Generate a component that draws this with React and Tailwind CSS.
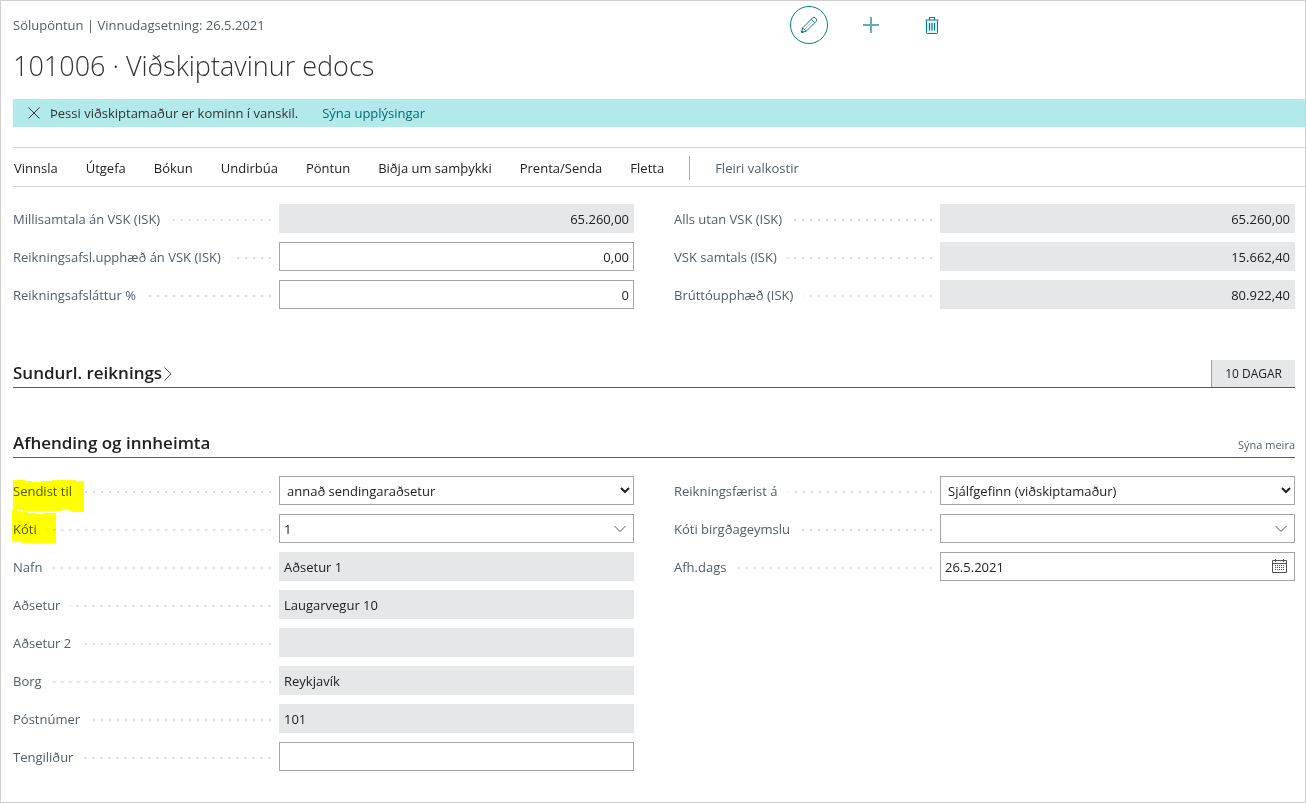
import { useId } from "react";

const menuItems = [
  "Vinnsla",
  "Útgefa",
  "Bókun",
  "Undirbúa",
  "Pöntun",
  "Biðja um samþykki",
  "Prenta/Senda",
  "Fletta"
];

const totalsLeft = [
  { label: "Millisamtala án VSK (ISK)", value: "65.260,00", type: "readonly", align: "right" },
  { label: "Reikningsafsl.upphæð án VSK (ISK)", value: "0,00", type: "text", align: "right" },
  { label: "Reikningsafsláttur %", value: "0", type: "text", align: "right" }
];

const totalsRight = [
  { label: "Alls utan VSK (ISK)", value: "65.260,00", type: "readonly", align: "right" },
  { label: "VSK samtals (ISK)", value: "15.662,40", type: "readonly", align: "right" },
  { label: "Brúttóupphæð (ISK)", value: "80.922,40", type: "readonly", align: "right" }
];

const shippingLeft = [
  { label: "Sendist til", value: "annað sendingaraðsetur", type: "select", marker: "wide" },
  { label: "Kóti", value: "1", type: "lookup", marker: "narrow" },
  { label: "Nafn", value: "Aðsetur 1", type: "readonly" },
  { label: "Aðsetur", value: "Laugarvegur 10", type: "readonly" },
  { label: "Aðsetur 2", value: "", type: "readonly" },
  { label: "Borg", value: "Reykjavík", type: "readonly" },
  { label: "Póstnúmer", value: "101", type: "readonly" },
  { label: "Tengiliður", value: "", type: "text" }
];

const shippingRight = [
  { label: "Reikningsfærist á", value: "Sjálfgefinn (viðskiptamaður)", type: "select" },
  { label: "Kóti birgðageymslu", value: "", type: "lookup" },
  { label: "Afh.dags", value: "26.5.2021", type: "date" }
];

function PencilIcon() {
  return (
    <svg width="18" height="18" viewBox="0 0 18 18" fill="none" stroke="currentColor" strokeLinejoin="round">
      <path d="M1.5 16.5l1.2-4.7L12.6 1.9a1.8 1.8 0 0 1 2.6 0l.9.9a1.8 1.8 0 0 1 0 2.6L6.2 15.3z" />
      <path d="M2.7 11.8l3.5 3.5M11.2 3.3l3.5 3.5" />
      <path d="M4.6 13.4l8-8" strokeOpacity="0.4" />
      <path d="M1.5 16.5l.5-1.8 1.3 1.3z" fill="currentColor" />
    </svg>
  );
}

function PlusIcon() {
  return (
    <svg width="16" height="16" viewBox="0 0 16 16" fill="none" stroke="#5fb0b5" strokeWidth="2">
      <path d="M8 0v16M0 8h16" />
    </svg>
  );
}

function TrashIcon() {
  return (
    <svg width="14" height="17" viewBox="0 0 14 17" fill="none" stroke="currentColor">
      <path d="M1.5 3.5v12a1 1 0 0 0 1 1h9a1 1 0 0 0 1-1v-12" fill="#e0f1f1" />
      <path d="M.5 3h13M4.5 2.5v-2h5v2" strokeWidth="1.2" />
      <path d="M4.5 6v7.5M7 6v7.5M9.5 6v7.5" strokeWidth="1.2" />
    </svg>
  );
}

function CloseIcon() {
  return (
    <svg width="12" height="12" viewBox="0 0 12 12" fill="none" stroke="currentColor">
      <path d="M.5.5l11 11M11.5.5l-11 11" />
    </svg>
  );
}

function ChevronIcon() {
  return (
    <svg width="12" height="8" viewBox="0 0 12 8" fill="none" stroke="currentColor">
      <path d="M.5 1L6 6.5 11.5 1" />
    </svg>
  );
}

function CalendarIcon() {
  return (
    <svg width="15" height="15" viewBox="0 0 15 15" fill="none" stroke="currentColor">
      <path d="M.5 1.5h14v12H.5zM.5 4.5h14" />
      <path d="M3.5 0v3M11.5 0v3" />
      <path d="M3 6.5h9M3 8.5h9M3 10.5h9" strokeDasharray="1 1" />
    </svg>
  );
}

function Marker({ shape }) {
  if (shape === "wide") {
    return (
      <svg className="absolute left-0 top-1 mix-blend-multiply" width="71" height="32" viewBox="0 0 71 32" fill="#ffff00">
        <path d="M0 0h12v1h7v1h9l2-1h9V0h24v1h8v31H59v-1h-3v-1h-7v1H10l-1-1H0z" />
      </svg>
    );
  }

  return (
    <svg className="absolute -left-px -top-1 mix-blend-multiply" width="44" height="33" viewBox="0 0 44 33" fill="#ffff00">
      <path d="M0 0h5v1h5v1h6v1h8l5 1h3V3h12v30H9v-1H2v-1H0z" />
    </svg>
  );
}

function FieldControl({ id, field }) {
  const align = field.align === "right" ? "text-right" : "text-left";

  if (field.type === "select") {
    return (
      <select
        id={id}
        className="flex-1 min-w-0 h-[29px] border border-[#a6a6a6] bg-white pl-[3px] text-[#212121]"
      >
        <option>{field.value}</option>
      </select>
    );
  }

  if (field.type === "lookup" || field.type === "date") {
    return (
      <div className="flex-1 min-w-0 h-[29px] flex items-center border border-[#a6a6a6] bg-white">
        <input
          id={id}
          type="text"
          defaultValue={field.value}
          className="flex-1 min-w-0 h-full px-1 text-[#212121] outline-none"
        />
        <button
          type="button"
          aria-label={field.type === "date" ? "Velja dagsetningu" : "Velja gildi"}
          className="px-[7px] text-[#505050]"
        >
          {field.type === "date" ? <CalendarIcon /> : <ChevronIcon />}
        </button>
      </div>
    );
  }

  if (field.type === "readonly") {
    return (
      <input
        id={id}
        type="text"
        readOnly
        value={field.value}
        className={`flex-1 min-w-0 h-[29px] px-[5px] bg-[#e6e7e9] text-[#212121] outline-none ${align}`}
      />
    );
  }

  return (
    <input
      id={id}
      type="text"
      defaultValue={field.value}
      className={`flex-1 min-w-0 h-[29px] px-1 border border-[#a6a6a6] bg-white text-[#212121] outline-none ${align}`}
    />
  );
}

function Field({ field }) {
  const id = useId();

  return (
    <div className="flex items-center">
      <div className="relative w-[266px] h-[29px] shrink-0 flex items-center gap-2.5 pr-2">
        <label htmlFor={id} className="whitespace-nowrap text-[#505c6d]">
          {field.label}
        </label>
        <span className="flex-1 h-0.5 mt-0.5 bg-[linear-gradient(to_right,transparent_6px,#d8d8dc_6px)] bg-[length:8px_2px] bg-right bg-repeat-x" />
        {field.marker && <Marker shape={field.marker} />}
      </div>

      <FieldControl id={id} field={field} />
    </div>
  );
}

function FieldGrid({ left, right }) {
  return (
    <div className="grid grid-cols-2 gap-x-10 items-start">
      <div className="flex flex-col gap-[9px]">
        {left.map((field) => (
          <Field key={field.label} field={field} />
        ))}
      </div>

      <div className="flex flex-col gap-[9px]">
        {right.map((field) => (
          <Field key={field.label} field={field} />
        ))}
      </div>
    </div>
  );
}

function App() {
  return (
    <div className="min-h-screen bg-white border border-[#cfcfcf] pl-3 font-['Open_Sans','Noto_Sans',sans-serif] text-[13px] leading-5 text-[#212121]">

      <header>
        <div className="flex items-center pt-[5px]">
          <p className="w-3/5 text-[#505c6d]">
            Sölupöntun | Vinnudagsetning: 26.5.2021
          </p>

          <div className="flex items-center pl-0.5 text-[#008089]">
            <button
              type="button"
              aria-label="Breyta"
              className="size-[38px] rounded-full border border-[#008089] flex items-center justify-center"
            >
              <PencilIcon />
            </button>
            <button type="button" aria-label="Nýtt" className="ml-[35px]">
              <PlusIcon />
            </button>
            <button type="button" aria-label="Eyða" className="ml-[46px]">
              <TrashIcon />
            </button>
          </div>
        </div>

        <h1 className="text-[27px] leading-[44px] font-light mb-[11px] text-[#333333]">
          101006 · Viðskiptavinur edocs
        </h1>
      </header>

      <div className="h-7 flex items-center bg-[#b2e9eb] pl-[15px] text-[#333333]">
        <button type="button" aria-label="Loka">
          <CloseIcon />
        </button>
        <span className="ml-[10px]">Þessi viðskiptamaður er kominn í vanskil.</span>
        <a href="#upplysingar" className="ml-6 text-[#006d75]">
          Sýna upplýsingar
        </a>
      </div>

      <nav className="mt-5 h-10 flex items-center gap-[25px] border-y border-[#d2d3d6] pl-px pt-0.5">
        <div className="flex gap-7">
          {menuItems.map((item) => (
            <button key={item} type="button" className="whitespace-nowrap">
              {item}
            </button>
          ))}
        </div>
        <span className="w-px h-6 bg-[#a0a8b4]" />
        <button type="button" className="whitespace-nowrap text-[#505c6d]">
          Fleiri valkostir
        </button>
      </nav>

      <main className="pr-2.5 pb-6">
        <section className="pt-[17px]">
          <FieldGrid left={totalsLeft} right={totalsRight} />
        </section>

        <section className="mt-[51px] h-7 flex items-stretch justify-between border-b border-[#505c6d]">
          <h2 className="text-[17px] leading-[26px] font-semibold">
            <button type="button" className="flex items-center gap-0.5">
              Sundurl. reiknings
              <svg className="mt-0.5" width="8" height="14" viewBox="0 0 8 14" fill="none" stroke="#505050">
                <path d="M.5.5L7 7 .5 13.5" />
              </svg>
            </button>
          </h2>
          <span className="flex items-center border-l border-[#a0a0a0] bg-[#e6e7e9] px-[13px] text-[12px]">
            10 DAGAR
          </span>
        </section>

        <section className="mt-[42px]">
          <div className="h-7 mb-[18px] flex items-start justify-between border-b border-[#505c6d]">
            <h2 className="text-[17px] leading-[26px] font-semibold">Afhending og innheimta</h2>
            <button type="button" className="self-end pb-0.5 text-[11px] text-[#505c6d]">
              Sýna meira
            </button>
          </div>

          <FieldGrid left={shippingLeft} right={shippingRight} />
        </section>
      </main>

    </div>
  );
}

export default App;
